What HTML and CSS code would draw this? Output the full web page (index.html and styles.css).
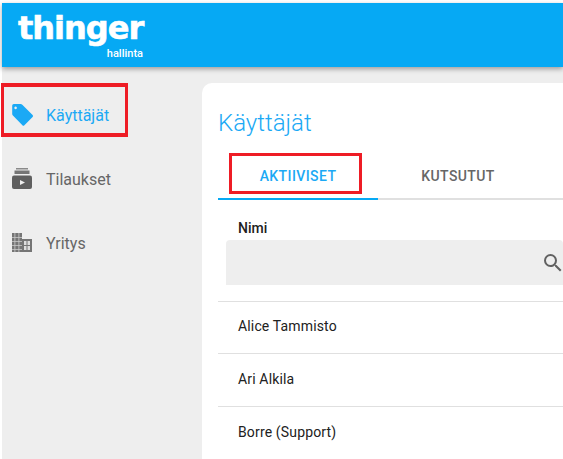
FILE: index.html
```html
<!DOCTYPE html>
<html lang="en">
<head>
  <meta charset="UTF-8" />
  <title>Käyttäjät</title>
  <link rel="stylesheet" href="styles.css">
</head>
<body>
  <header class="topbar">
    <div class="logo">
      <span class="logo-name">thinger</span>
      <span class="logo-sub">hallinta</span>
    </div>
  </header>

  <div class="layout">
    <nav class="sidebar">
      <a class="nav-item active">
        <svg class="nav-icon" viewBox="0 0 24 24"><path fill="#1ba9f5" fill-rule="evenodd" d="M2.200 2.600 Q2.200 1 3.800 1 H10.600 Q11.600 1 12.300 1.700 L22.600 12 Q23.600 13 22.600 14 L14.400 22.200 Q13.400 23.200 12.400 22.200 L2.900 12.600 Q2.200 11.900 2.200 11 Z M5.600 3.600 A1.300 1.300 0 1 0 5.610 3.600 Z"/></svg>
        <span>Käyttäjät</span>
      </a>
      <a class="nav-item">
        <svg class="nav-icon" viewBox="0 0 24 24"><path fill="#8a8a8a" d="M6 1 H18 V2.500 H6 Z"/><path fill="#757575" d="M4.500 3.500 H19.500 V7 H4.500 Z"/><path fill="#5f5f5f" d="M4 8.500 H20 Q22 8.500 22 10.500 V20 Q22 22 20 22 H4 Q2 22 2 20 V10.500 Q2 8.500 4 8.500 Z"/><path fill="#eee" d="M10 13 L15 15.500 L10 18 Z"/></svg>
        <span>Tilaukset</span>
      </a>
      <a class="nav-item">
        <svg class="nav-icon" viewBox="0 0 24 24">
          <path fill="#757575" d="M2 2 H12 V8 H22 V21 H2 Z"/>
          <path fill="#ccc" d="M2 6 h10 v.8 h-10 z M2 10 h10 v.8 h-10 z M2 14 h10 v.8 h-10 z M2 18 h10 v.8 h-10 z M4.500 2 h.8 v19 h-.8 z M8.500 2 h.8 v19 h-.8 z"/>
          <path fill="#ddd" d="M14 10 h6 v9 h-6 z"/>
          <path fill="#757575" d="M16.500 10 h1 v9 h-1 z M14 14 h6 v1 h-6 z"/>
        </svg>
        <span>Yritys</span>
      </a>
    </nav>

    <main class="card">
      <h1 class="card-title">Käyttäjät</h1>
      <div class="tabs">
        <div class="tab active">AKTIIVISET</div>
        <div class="tab">KUTSUTUT</div>
      </div>
      <div class="filter">
        <div class="filter-label">Nimi</div>
        <div class="filter-box">
          <svg class="search-icon" viewBox="0 0 24 24"><path fill="#616161" d="M15.500 14h-.79l-.28-.27A6.471 6.471 0 0 0 16 9.500 6.500 6.500 0 1 0 9.500 16c1.610 0 3.090-.59 4.230-1.570l.27.28v.79l5 4.990L20.490 19l-4.990-5zm-6 0C7.010 14 5 11.990 5 9.500S7.010 5 9.500 5 14 7.010 14 9.500 11.990 14 9.500 14z"/></svg>
        </div>
      </div>
      <div class="row">Alice Tammisto</div>
      <div class="row">Ari Alkila</div>
      <div class="row">Borre (Support)</div>
    </main>
  </div>

  <div class="mark mark-nav"></div>
  <div class="mark mark-tab"></div>
</body>
</html>
```

FILE: styles.css
```css
html, body {
  margin: 0;
  padding: 0;
  height: 100%;
  overflow: hidden;
  background: #fff;
  font-family: 'Roboto', sans-serif;
}

body {
  position: relative;
  padding-top: 3px;
  box-sizing: border-box;
}

.topbar {
  height: 64px;
  margin-left: 2px;
  background: #06a9f4;
  box-shadow: 0 2px 5px rgba(0, 0, 0, 0.35);
  position: relative;
  z-index: 1;
  box-sizing: border-box;
  padding: 7px 0 0 16px;
}

.logo {
  width: 125px;
  color: #fff;
  display: flex;
  flex-direction: column;
  align-items: flex-end;
}

.logo-name {
  width: 100%;
  font-family: 'DejaVu Sans', sans-serif;
  font-weight: 700;
  font-size: 32px;
  line-height: 36px;
  letter-spacing: -1px;
  -webkit-text-stroke: 0.6px #fff;
}

.logo-sub {
  font-size: 11px;
  line-height: 13px;
  font-weight: 500;
  margin-top: 1px;
}

.layout {
  display: flex;
  height: 392px;
  margin-left: 2px;
  background: #eee;
}

.sidebar {
  width: 200px;
  flex-shrink: 0;
  padding-top: 16px;
}

.nav-item {
  display: flex;
  align-items: center;
  height: 64px;
  padding-left: 8px;
  color: #666;
  font-size: 16px;
}

.nav-item span {
  padding-top: 1px;
}

.nav-item.active {
  color: #1ba9f5;
}

.nav-icon {
  width: 24px;
  height: 24px;
  margin-right: 12px;
}

.card {
  flex: 1;
  min-width: 0;
  margin-top: 16px;
  padding: 0 0 0 16px;
  background: #fff;
  border-top-left-radius: 10px;
}

.card-title {
  margin: 0;
  padding-top: 24px;
  height: 46px;
  font-size: 24px;
  line-height: 32px;
  font-weight: 300;
  color: #1ba9f5;
}

.tabs {
  display: flex;
  height: 45px;
  border-bottom: 2px solid #e0e0e0;
}

.tab {
  width: 160px;
  height: 45px;
  line-height: 46px;
  text-align: center;
  font-size: 14px;
  font-weight: 500;
  letter-spacing: 0.4px;
  color: #666;
}

.tab.active {
  color: #1ba9f5;
  border-bottom: 2px solid #06a9f4;
}

.filter {
  padding: 18px 0 16px 8px;
  border-bottom: 1px solid #e0e0e0;
}

.filter-label {
  padding-left: 12px;
  font-size: 14px;
  font-weight: 500;
  line-height: 20px;
  height: 22px;
  color: #212121;
}

.filter-box {
  display: flex;
  align-items: center;
  justify-content: flex-end;
  height: 45px;
  background: #eee;
  border-radius: 4px 4px 0 0;
}

.search-icon {
  width: 24px;
  height: 24px;
  margin-right: -2px;
}

.row {
  height: 52px;
  line-height: 51px;
  padding-left: 20px;
  font-size: 14px;
  letter-spacing: 0.15px;
  color: #212121;
  border-bottom: 1px solid #e0e0e0;
}

.filter + .row {
  height: 51px;
  line-height: 49px;
}

.mark {
  position: absolute;
  box-sizing: border-box;
  border: 3px solid #ee1c25;
  z-index: 2;
}

.mark-nav {
  left: 1px;
  top: 83px;
  width: 127px;
  height: 54px;
  border-width: 4px 3px;
}

.mark-tab {
  left: 229px;
  top: 153px;
  width: 133px;
  height: 41px;
}
```
